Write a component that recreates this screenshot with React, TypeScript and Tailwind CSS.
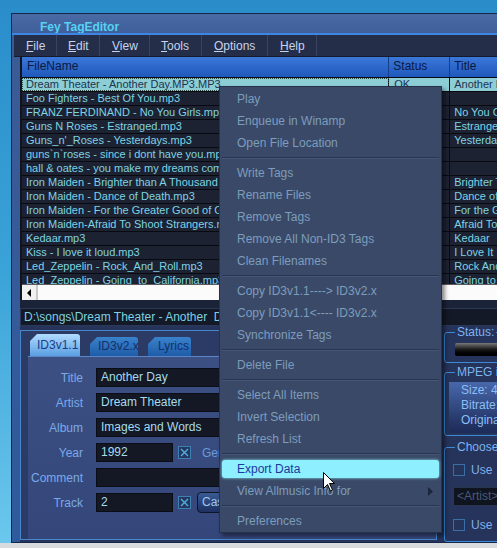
import React from "react";

const files: [string, string, string][] = [
  ["Dream Theater - Another Day.MP3.MP3", "OK", "Another Day"],
  ["Foo Fighters - Best Of You.mp3", "", ""],
  ["FRANZ FERDINAND - No You Girls.mp3", "", "No You Girls"],
  ["Guns N Roses - Estranged.mp3", "", "Estranged"],
  ["Guns_n'_Roses - Yesterdays.mp3", "", "Yesterdays"],
  ["guns`n`roses - since i dont have you.mp3", "", ""],
  ["hall & oates - you make my dreams come true.mp3", "", ""],
  ["Iron Maiden - Brighter than A Thousand Suns.mp3", "", "Brighter Than a Thousand Suns"],
  ["Iron Maiden - Dance of Death.mp3", "", "Dance of Death"],
  ["Iron Maiden - For the Greater Good of God.mp3", "", "For the Greater Good of God"],
  ["Iron Maiden-Afraid To Shoot Strangers.mp3", "", "Afraid To Shoot Strangers"],
  ["Kedaar.mp3", "", "Kedaar"],
  ["Kiss - I love it loud.mp3", "", "I Love It Loud"],
  ["Led_Zeppelin - Rock_And_Roll.mp3", "", "Rock And Roll"],
  ["Led_Zeppelin - Going_to_California.mp3", "", "Going to California"],
];

const menus = [
  { label: "File", w: "w-[43px] pl-[12px]" },
  { label: "Edit", w: "w-[43px] pl-[11px]" },
  { label: "View", w: "w-[50px] pl-[12px]" },
  { label: "Tools", w: "w-[52px] pl-[11px]" },
  { label: "Options", w: "w-[66px] pl-[12px]" },
  { label: "Help", w: "w-[49px] pl-[12px]" },
];

const contextGroups = [
  ["Play", "Enqueue in Winamp", "Open File Location"],
  ["Write Tags", "Rename Files", "Remove Tags", "Remove All Non-ID3 Tags", "Clean Filenames"],
  ["Copy ID3v1.1----> ID3v2.x", "Copy ID3v1.1<---- ID3v2.x", "Synchronize Tags"],
  ["Delete File"],
  ["Select All Items", "Invert Selection", "Refresh List"],
  ["Export Data", "View Allmusic Info for"],
  ["Preferences"],
];

function XBox() {
  return (
    <div className="w-[13px] h-[13px] border border-[#3f80b4] bg-[#26385e] flex items-center justify-center shrink-0">
      <svg width="9" height="9" viewBox="0 0 9 9">
        <path d="M1 1L8 8M8 1L1 8" stroke="#4fb0e0" strokeWidth="1.4" />
      </svg>
    </div>
  );
}

function Field({ label, value, width = "w-[320px]", children }: { label: string; value: string; width?: string; children?: React.ReactNode }) {
  return (
    <div className="flex items-center h-[19px]">
      <div className="w-[55px] text-right text-[#7aaae8]">{label}</div>
      <div className={`ml-[13px] h-[19px] ${width} bg-[#131824] border border-[#0a0d15] pl-[4px] leading-[17px] text-[#a6dced] shrink-0`}>
        {value}
      </div>
      {children}
    </div>
  );
}

function UseBox() {
  return (
    <div className="flex items-center h-[13px]">
      <div className="w-[12px] h-[12px] border border-[#3a6ea8] bg-[#24345a]" />
      <span className="ml-[6px] text-[#80b0ea]">Use</span>
    </div>
  );
}

export default function App() {
  return (
    <div className="relative w-[497px] h-[548px] overflow-hidden bg-gradient-to-b from-[#2a8dca] via-[#3aa3d8] to-[#6cc8ee] font-['Liberation_Sans',Arial,sans-serif] text-[11px]">
      {/* window */}
      <div className="ml-[11px] mt-[13px] w-[540px] h-[530px] flex flex-col bg-[#3b5b96] border border-[#15264a]">
        {/* title bar */}
        <div className="h-[19px] pl-[28px] pt-[7px] leading-[13px] text-[12px] font-bold text-[#55d2f2] bg-gradient-to-b from-[#4a6aa6] to-[#3f5f9a]">
          Fey TagEditor
        </div>
        <div className="h-[2px] bg-[#3d86e2]" />
        {/* menu bar */}
        <div className="h-[22px] ml-[2px] flex bg-[#252e48] text-[12px] text-[#c6d3ec] border-b border-[#141a2a]">
          {menus.map((m) => (
            <div key={m.label} className={`${m.w} h-full flex items-center border-r border-[#3a4462]`}>
              <span>
                <span className="underline">{m.label[0]}</span>
                {m.label.slice(1)}
              </span>
            </div>
          ))}
        </div>

        {/* body */}
        <div className="flex-1 flex flex-col pl-[8px] bg-gradient-to-b from-[#3b5b96] to-[#2f5a9c]">
          {/* list */}
          <div className="h-[243px] flex flex-col bg-[#1b2131] border-l-2 border-[#10141f]">
            <div className="h-[20px] flex bg-gradient-to-b from-[#3a78d8] to-[#1f58bc] text-[12px] text-[#0b1a44] leading-[19px]">
              <div className="w-[368px] pl-[5px] border-r border-[#153f8a]">FileName</div>
              <div className="w-[61px] pl-[4px] border-r border-[#153f8a]">Status</div>
              <div className="w-[100px] pl-[4px]">Title</div>
            </div>
            <div className="h-[207px] overflow-hidden">
              {files.map(([name, status, title], i) => {
                const sel = i === 0;
                return (
                  <div
                    key={name}
                    className={`h-[14px] flex border-t border-[#080a10] leading-[13px] whitespace-nowrap ${
                      sel ? "bg-[#8ccdd6] text-[#1d3450]" : "bg-[#1c2232] text-[#7fd3e2]"
                    }`}
                  >
                    <div className={`w-[368px] pl-[4px] overflow-hidden border-r border-[#080a10] ${sel ? "outline outline-1 outline-dotted outline-[#2a4a40] -outline-offset-1" : ""}`}>
                      {name}
                    </div>
                    <div className="w-[61px] pl-[5px] overflow-hidden border-r border-[#080a10]">{status}</div>
                    <div className="w-[100px] pl-[4px] overflow-hidden">{title}</div>
                  </div>
                );
              })}
            </div>
            <div className="h-[16px] flex bg-[#fbfbfb] border-t border-[#5a5a5a]">
              <div className="w-[16px] h-full bg-[#f0f0f0] border-r-2 border-[#c8c8c8] flex items-center justify-center">
                <svg width="5" height="8" viewBox="0 0 5 8">
                  <path d="M4 0 L0 4 L4 8 Z" fill="#000" />
                </svg>
              </div>
            </div>
          </div>

          <div className="h-[8px] bg-[#1b2338]" />
          {/* path bar */}
          <div className="h-[18px] bg-[#131927] border border-[#2c3858] pl-[3px] leading-[16px] text-[12px] text-[#7fd0e0] whitespace-pre">
            D:\songs\Dream Theater - Another  Day.MP3.MP3
          </div>

          {/* lower panel */}
          <div className="flex-1 flex bg-[#26335a]">
            {/* tag editor */}
            <div className="mt-[4px] mb-[2px] w-[417px] shrink-0 flex flex-col border border-[#4a86cc] bg-[#2c3b66] pl-[7px]">
              <div className="h-[25px] flex items-end pl-[2px] gap-[10px] text-[12px]">
                <div className="w-[50px] h-[22px] pl-[7px] pt-[4px] leading-[14px] bg-gradient-to-b from-[#b0dcff] to-[#5a9ee0] text-[#1a3c88] [clip-path:polygon(7px_0,100%_0,100%_100%,0_100%,0_7px)] rounded-tr-[3px]">
                  ID3v1.1
                </div>
                <div className="w-[48px] h-[19px] pl-[8px] pt-[2px] leading-[14px] bg-gradient-to-b from-[#3a82cc] to-[#1e5ca8] text-[#12306a] [clip-path:polygon(7px_0,100%_0,100%_100%,0_100%,0_7px)] rounded-tr-[3px]">
                  ID3v2.x
                </div>
                <div className="w-[43px] h-[19px] pl-[10px] pt-[2px] leading-[14px] bg-gradient-to-b from-[#3a82cc] to-[#1e5ca8] text-[#12306a] [clip-path:polygon(7px_0,100%_0,100%_100%,0_100%,0_7px)] rounded-tr-[3px]">
                  Lyrics
                </div>
              </div>
              <div className="flex-1 bg-gradient-to-b from-[#3c5084] to-[#34467a] border-t border-[#5a86c8] pt-[11px] flex flex-col gap-[6px] text-[12px]">
                <Field label="Title" value="Another Day" />
                <Field label="Artist" value="Dream Theater" />
                <Field label="Album" value="Images and Words" />
                <Field label="Year" value="1992" width="w-[77px]">
                  <div className="ml-[5px]">
                    <XBox />
                  </div>
                  <span className="ml-[11px] text-[#6a9ad8]">Genre</span>
                </Field>
                <Field label="Comment" value="" />
                <Field label="Track" value="2" width="w-[77px]">
                  <div className="ml-[5px]">
                    <XBox />
                  </div>
                  <div className="ml-[6px] h-[21px] w-[60px] rounded-[4px] border border-[#0e1626] bg-gradient-to-b from-[#3a5a94] to-[#1e3060] pl-[4px] leading-[19px] text-[#9ec8f0]">
                    Case
                  </div>
                </Field>
              </div>
            </div>

            {/* right info column */}
            <div className="ml-[7px] w-[140px] flex flex-col text-[12px] whitespace-nowrap">
              <fieldset className="border border-[#3b8ad6] rounded-[3px] pl-[10px] pb-[6px]">
                <legend className="ml-0 px-[2px] leading-[13px] text-[#7cb4f0]">Status:</legend>
                <div className="mt-[4px] h-[13px] rounded-[2px] bg-gradient-to-b from-[#7a7a7a] via-[#1a1a1a] to-black" />
              </fieldset>
              <fieldset className="mt-[3px] border border-[#3b8ad6] rounded-[3px] pl-[4px] pb-[2px]">
                <legend className="ml-[6px] px-[2px] leading-[13px] text-[#7cb4f0]">MPEG info</legend>
                <div className="mt-[3px] h-[51px] bg-gradient-to-b from-[#4868ac] to-[#1c2a56] pl-[12px] pt-[1px] leading-[15px] text-[#8abff6]">
                  <div>Size: 4,56 MB</div>
                  <div>Bitrate: 128 kbps</div>
                  <div>Original</div>
                </div>
              </fieldset>
              <fieldset className="mt-[5px] flex-1 border border-[#3b8ad6] rounded-[3px] pl-[8px]">
                <legend className="ml-[2px] px-[2px] leading-[13px] text-[#7cb4f0]">Choose preset</legend>
                <div className="mt-[9px]">
                  <UseBox />
                </div>
                <div className="mt-[11px] h-[19px] bg-[#10141e] border border-[#2a3550] pl-[3px] leading-[17px] text-[#4a5a7a]">
                  &lt;Artist&gt;
                </div>
                <div className="mt-[12px]">
                  <UseBox />
                </div>
              </fieldset>
            </div>
          </div>
        </div>
      </div>
      <div className="h-[5px] bg-[#d9dbdd]" />

      {/* context menu */}
      <div className="absolute left-[219px] top-[86px] w-[223px] h-[447px] bg-[#3a4967] border border-[#27324a] shadow-[3px_3px_4px_rgba(0,0,0,0.45)] pt-[1px] text-[12px] text-[#7c9dbd]">
        {contextGroups.map((group, gi) => (
          <div key={gi}>
            {gi > 0 && (
              <div className="h-[8px] flex flex-col justify-center px-[2px]">
                <div className="h-[1px] bg-[#2b364e]" />
                <div className="h-[1px] bg-[#46557a]" />
              </div>
            )}
            {group.map((item) =>
              item === "Export Data" ? (
                <div key={item} className="h-[22px] px-[2px] py-[2px]">
                  <div className="h-[18px] rounded-[3px] bg-[#8eefff] shadow-[0_0_3px_#8eefff] pl-[15px] leading-[18px] text-[#1a3aa0]">
                    {item}
                  </div>
                </div>
              ) : (
                <div key={item} className="h-[22px] pl-[17px] pr-[8px] leading-[22px] flex justify-between items-center">
                  <span>{item}</span>
                  {item === "View Allmusic Info for" && (
                    <svg width="5" height="9" viewBox="0 0 5 9">
                      <path d="M0 0 L5 4.5 L0 9 Z" fill="#1c263c" />
                    </svg>
                  )}
                </div>
              )
            )}
          </div>
        ))}
      </div>

      {/* mouse cursor */}
      <svg className="absolute left-[323px] top-[472px]" width="13" height="20" viewBox="0 0 13 20">
        <path d="M0.5 0.5 L0.5 16.5 L4.5 12.5 L7.5 19 L9.5 18 L6.5 11.5 L11.5 11.5 Z" fill="#fff" stroke="#000" strokeWidth="1" />
      </svg>
    </div>
  );
}
